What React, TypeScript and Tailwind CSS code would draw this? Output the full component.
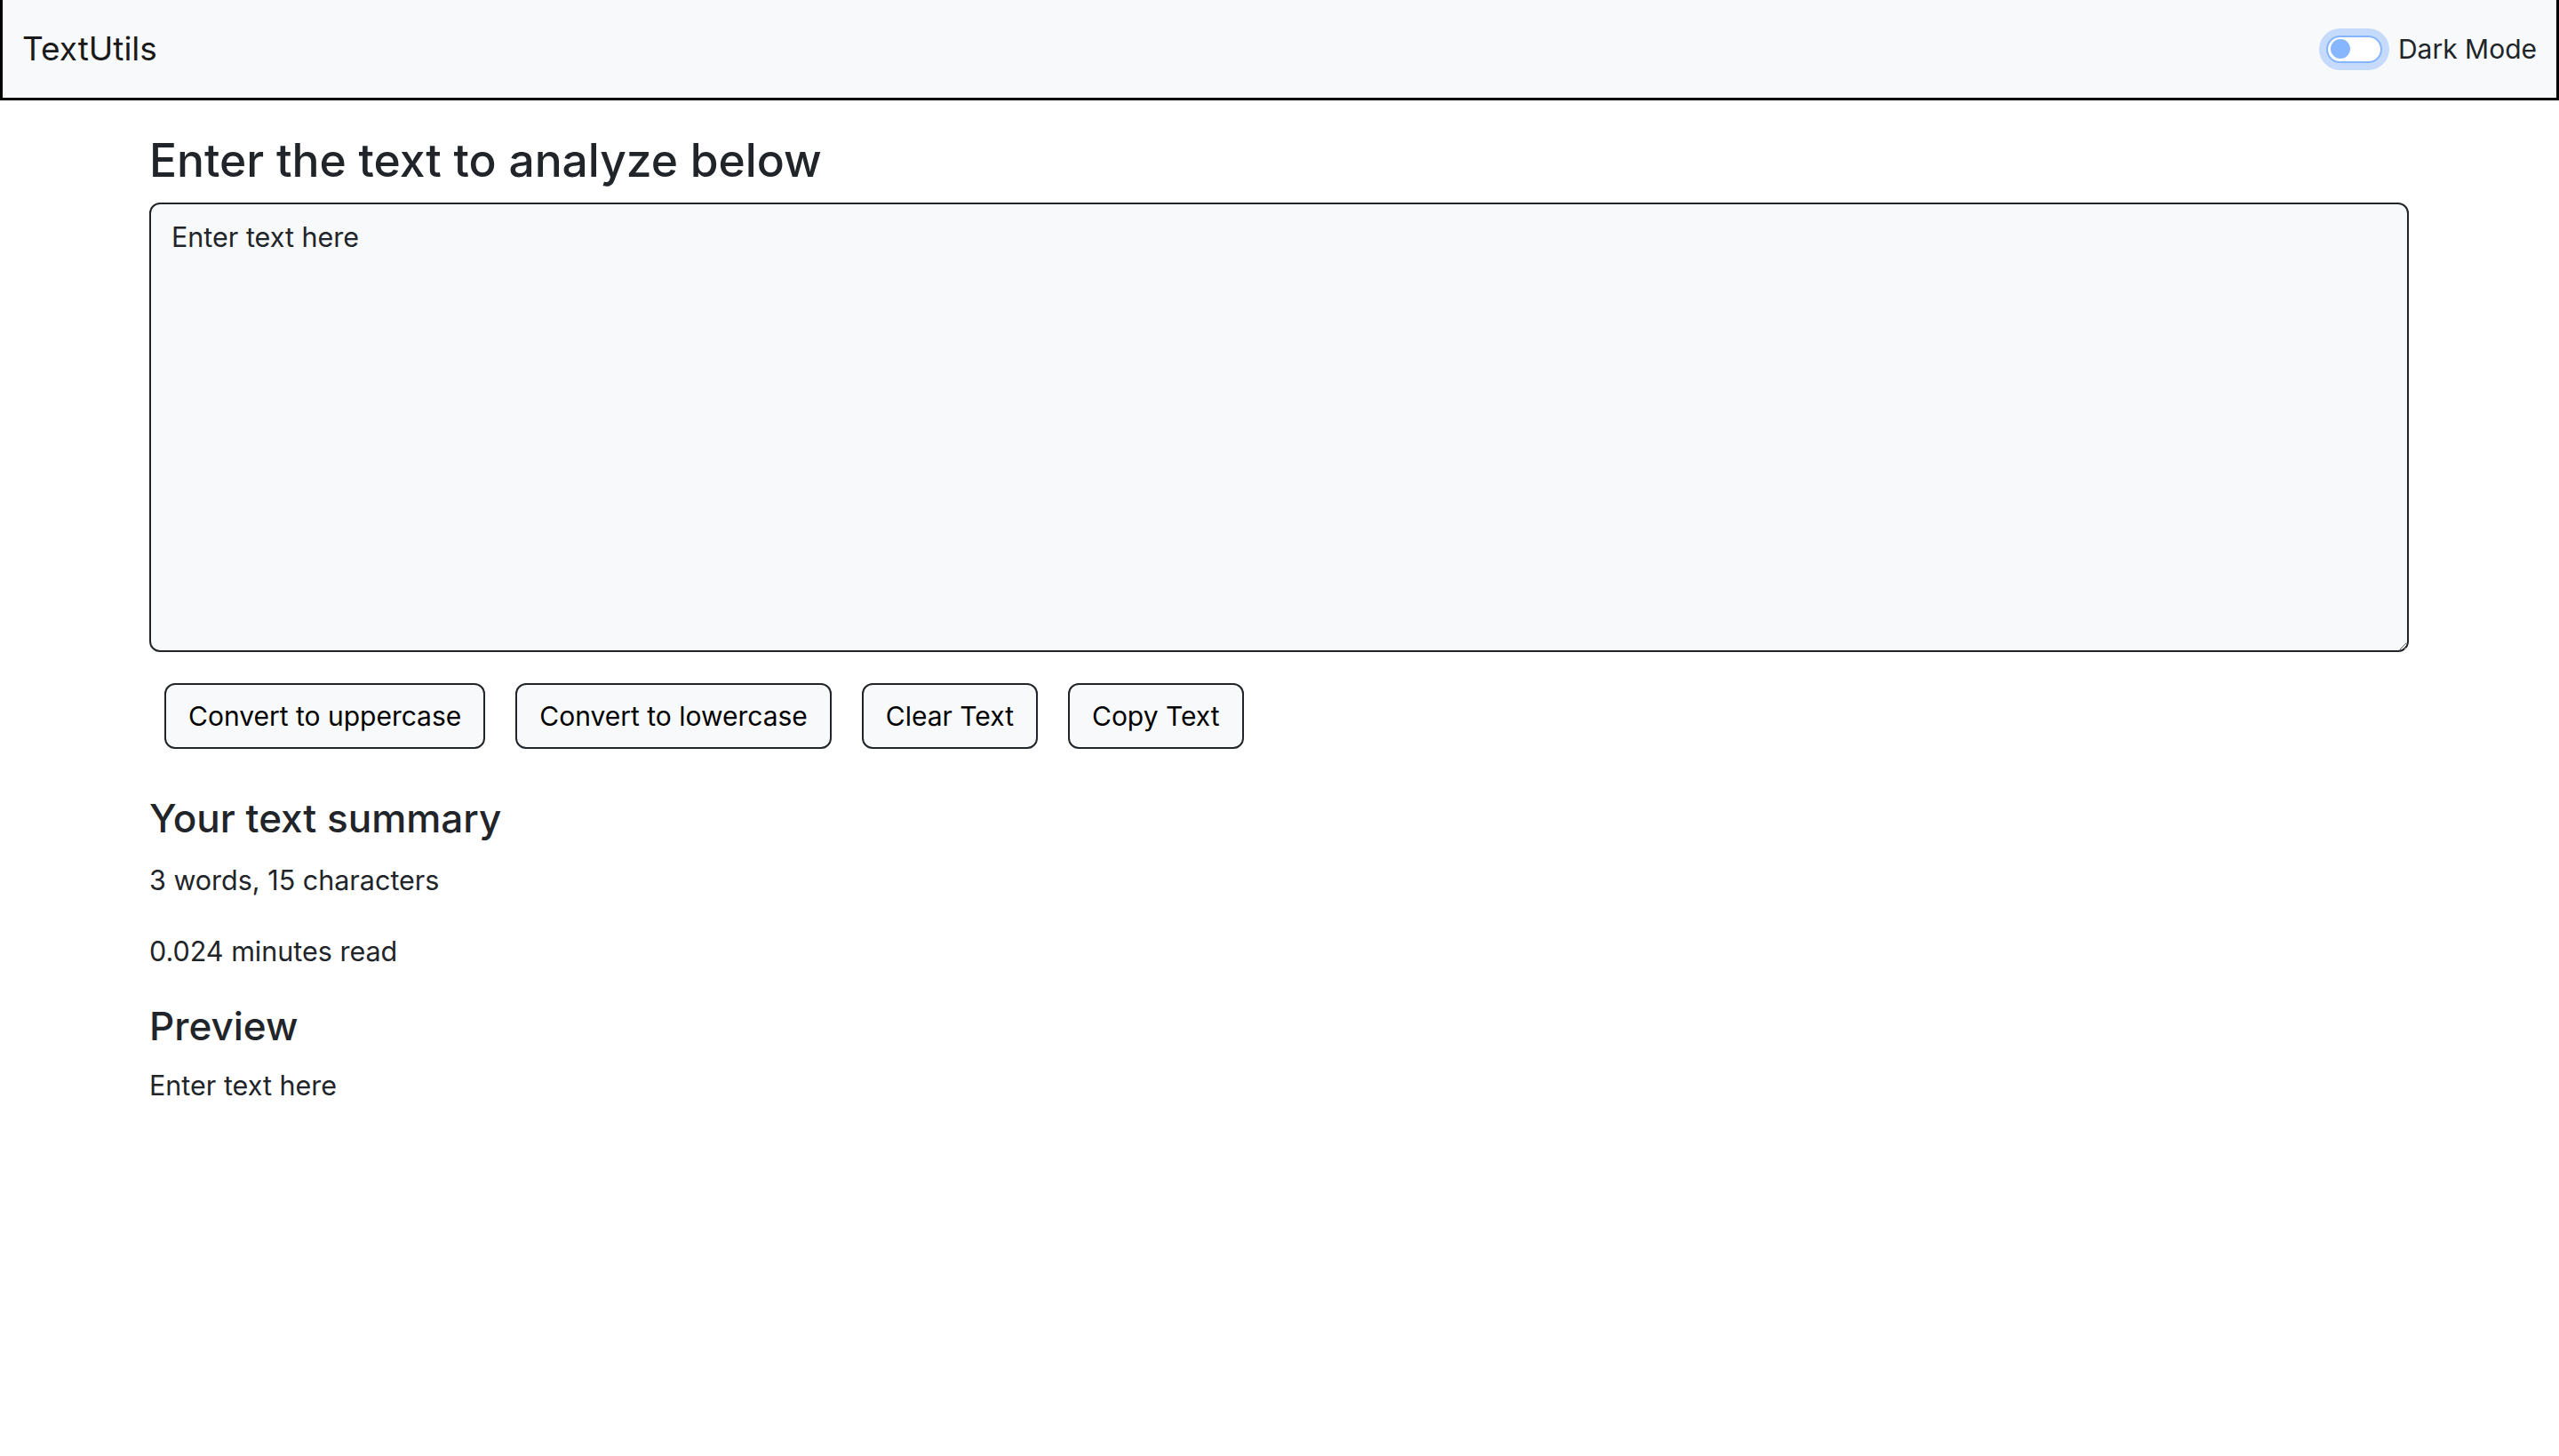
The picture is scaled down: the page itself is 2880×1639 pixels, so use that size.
import React, { useState } from 'react';

const Navbar: React.FC<{ dark: boolean; onToggle: () => void }> = ({ dark, onToggle }) => {
  return (
    <nav className="flex h-[113px] items-center justify-between border-x-[3px] border-b-[3px] border-black bg-[#f8f9fa] pl-[22px] pr-[22px]">
      <span className="text-[37px] text-[#1a1a1a]">TextUtils</span>
      <label className="flex cursor-pointer items-center gap-[18px]">
        <span
          onClick={onToggle}
          className="flex h-[31px] w-[63px] items-center rounded-full border-2 border-[#86b7fe] bg-white pl-[3px] ring-8 ring-[#c6dafc]"
        >
          <span className="h-[22px] w-[22px] rounded-full bg-[#86b7fe]" />
        </span>
        <span className="text-[30px] text-[#212529]">{dark ? 'Light Mode' : 'Dark Mode'}</span>
      </label>
    </nav>
  );
};

const buttons = ['Convert to uppercase', 'Convert to lowercase', 'Clear Text', 'Copy Text'];

export default function App() {
  const [text, setText] = useState('Enter text here');
  const [dark, setDark] = useState(false);

  const words = text.split(/\s+/).filter((w) => w.length > 0);
  const minutes = Math.round(0.008 * words.length * 1000) / 1000;

  return (
    <div className="min-h-screen bg-white text-[#212529]" style={{ fontFamily: 'Inter, "Noto Sans", sans-serif' }}>
      <Navbar dark={dark} onToggle={() => setDark(!dark)} />

      <div className="pl-[168px] pr-[169px]">
        <h2 className="mt-[37px] mb-[16px] text-[51.5px] leading-[1.2] font-medium">Enter the text to analyze below</h2>
        <textarea
          value={text}
          onChange={(e) => setText(e.target.value)}
          className="block h-[506px] w-full resize-y rounded-[12px] border-2 border-[#212529] bg-[#f8f9fa] px-[23px] py-[14px] text-[30.5px] leading-[45px] text-[#212529] outline-none"
        />

        <div className="mt-[35px] flex">
          {buttons.map((b) => (
            <button
              key={b}
              className="mx-[17px] rounded-[12px] border-2 border-[#212529] bg-[#f8f9fa] px-[25px] py-[12px] text-[30px] leading-[46px] text-black"
            >
              {b}
            </button>
          ))}
        </div>

        <h3 className="mt-[52px] mb-[20px] text-[44px] leading-[1.2] font-medium">Your text summary</h3>
        <p className="mb-[35px] text-[30.5px] leading-[45px]">
          {words.length} words, {text.length} characters
        </p>
        <p className="text-[30.5px] leading-[45px]">{minutes} minutes read</p>

        <h3 className="mt-[36px] mb-[18px] text-[44px] leading-[1.2] font-medium">Preview</h3>
        <p className="text-[30.5px] leading-[45px]">{text}</p>
      </div>
    </div>
  );
}
